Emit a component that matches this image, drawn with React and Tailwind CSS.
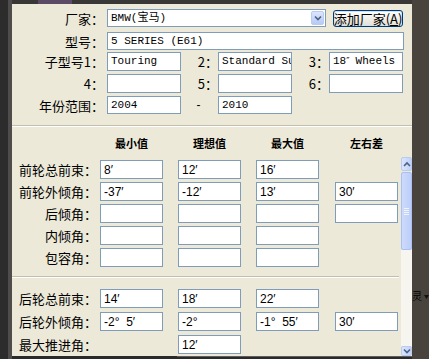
import React from "react";

const CJK = "font-['Noto_Sans_CJK_SC','Noto_Sans',sans-serif]";
const MONO = "font-['Liberation_Mono','Noto_Sans_CJK_SC',monospace]";
const SANS = "font-['Liberation_Sans','Noto_Sans_CJK_SC',sans-serif]";

function Box({ w, h = "h-[19px]", children, mono = true }) {
  return (
    <div
      className={`${w} ${h} shrink-0 border border-[#7f9db9] bg-white flex items-center pl-[3px] overflow-hidden whitespace-nowrap text-black ${
        mono ? `${MONO} text-[11px]` : `${SANS} text-[12px]`
      }`}
    >
      {children}
    </div>
  );
}

function TopLabel({ children, w = "w-[92px]" }) {
  return (
    <div className={`${w} shrink-0 text-right ${CJK} text-[13px] leading-none text-black`}>
      {children}
    </div>
  );
}

function Groove({ className = "" }) {
  return <div className={`h-[2px] border-t border-t-[#c2bfae] border-b border-b-white ${className}`} />;
}

function Chevron({ up }) {
  return (
    <svg width="8" height="6" viewBox="0 0 8 6">
      <path
        d={up ? "M1 5 L4 2 L7 5" : "M1 1.5 L4 4.5 L7 1.5"}
        fill="none"
        stroke="#4d6185"
        strokeWidth="1.6"
      />
    </svg>
  );
}

function LowerRow({ label, v1, v2, v3, v4, show = [true, true, true, true] }) {
  const vals = [v1, v2, v3, v4];
  return (
    <div className="flex items-center h-[19px]">
      <div className={`w-[85px] shrink-0 text-right ${CJK} text-[13px] leading-none text-black`}>{label}</div>
      <div className="w-[3px] shrink-0" />
      {vals.map((v, i) => (
        <div key={i} className={`flex ${i === 0 ? "" : i === 3 ? "ml-[16px]" : "ml-[15px]"}`}>
          {show[i] ? (
            <Box w="w-[63px]" mono={false}>
              {v}
            </Box>
          ) : (
            <div className="w-[63px] h-[19px]" />
          )}
        </div>
      ))}
    </div>
  );
}

export default function App() {
  return (
    <div className="w-[429px] h-[359px] bg-[#47433c] flex overflow-hidden">
      {/* left strip */}
      <div className="w-[12px] shrink-0 flex">
        <div className="w-[8px] bg-[#2c2c2c]" />
        <div className="w-[4px] bg-[#4e4d4b]" />
      </div>

      {/* middle */}
      <div className="w-[400px] shrink-0 flex flex-col">
        <div className="h-[4px] bg-[#3a3837] flex">
          <div className="ml-[26px] w-[34px] bg-[#5b4b66]" />
        </div>

        <div className="h-[352px] bg-[#ece9d8] flex flex-col">
          {/* top section */}
          <div className="h-[121px] flex flex-col">
            {/* row 1 */}
            <div className="mt-[5px] flex items-center h-[18px]">
              <TopLabel>厂家：</TopLabel>
              <div className="w-[3px] shrink-0" />
              <div className="w-[219px] h-[18px] border border-[#7f9db9] bg-white flex items-stretch p-[1px]">
                <div className={`flex-1 flex items-center pl-[2px] ${MONO} text-[11px] text-black whitespace-nowrap`}>
                  BMW(宝马)
                </div>
                <div className="w-[13px] rounded-[2px] border border-[#b9cbf3] bg-gradient-to-b from-[#dce6fd] to-[#b7caf6] flex items-center justify-center">
                  <Chevron />
                </div>
              </div>
              <div className="w-[7px] shrink-0" />
              <div
                className={`w-[70px] h-[17px] rounded-[3px] border border-[#003c74] bg-gradient-to-b from-white to-[#e3e0d2] shadow-[inset_0_0_0_1px_#cfe0fb] flex items-center justify-center ${CJK} text-[13px] leading-none text-black whitespace-nowrap`}
              >
                添加厂家(<span className="underline">A</span>)
              </div>
            </div>

            {/* row 2 */}
            <div className="mt-[5px] flex items-center h-[18px]">
              <TopLabel>型号：</TopLabel>
              <div className="w-[3px] shrink-0" />
              <Box w="w-[297px]" h="h-[18px]">5 SERIES (E61)</Box>
            </div>

            {/* row 3 */}
            <div className="mt-[2px] flex items-center h-[19px]">
              <TopLabel>子型号1：</TopLabel>
              <div className="w-[3px] shrink-0" />
              <Box w="w-[74px]">Touring</Box>
              <TopLabel w="w-[37px]">2：</TopLabel>
              <Box w="w-[74px]">Standard Su</Box>
              <TopLabel w="w-[37px]">3：</TopLabel>
              <Box w="w-[74px]">
                <span>18</span>
                <span className="font-['DejaVu_Sans',sans-serif] text-[9px]">″</span>
                <span className="ml-[6px]">Wheels</span>
              </Box>
            </div>

            {/* row 4 */}
            <div className="mt-[3px] flex items-center h-[19px]">
              <TopLabel>4：</TopLabel>
              <div className="w-[3px] shrink-0" />
              <Box w="w-[74px]"></Box>
              <TopLabel w="w-[37px]">5：</TopLabel>
              <Box w="w-[74px]"></Box>
              <TopLabel w="w-[37px]">6：</TopLabel>
              <Box w="w-[74px]"></Box>
            </div>

            {/* row 5 */}
            <div className="mt-[3px] flex items-center h-[18px]">
              <TopLabel>年份范围：</TopLabel>
              <div className="w-[3px] shrink-0" />
              <Box w="w-[74px]" h="h-[18px]">2004</Box>
              <div className={`w-[37px] shrink-0 text-center pr-[2px] ${SANS} text-[12px] text-black`}>-</div>
              <Box w="w-[74px]" h="h-[18px]">2010</Box>
            </div>
          </div>

          <Groove />

          {/* lower section */}
          <div className="flex-1 flex">
            <div className="w-[389px] shrink-0 flex flex-col pt-[9px]">
              <div className="flex h-[14px] items-center">
                <div className="w-[88px] shrink-0" />
                {["最小值", "理想值", "最大值", "左右差"].map((t, i) => (
                  <div
                    key={t}
                    className={`w-[63px] text-center ${CJK} text-[11px] font-bold leading-none text-black ${
                      i === 0 ? "" : i === 3 ? "ml-[16px]" : "ml-[15px]"
                    }`}
                  >
                    {t}
                  </div>
                ))}
              </div>

              <div className="mt-[10px] flex flex-col gap-[3px]">
                <LowerRow label="前轮总前束：" v1="8′" v2="12′" v3="16′" show={[true, true, true, false]} />
                <LowerRow label="前轮外倾角：" v1="-37′" v2="-12′" v3="13′" v4="30′" />
                <LowerRow label="后倾角：" />
                <LowerRow label="内倾角：" show={[true, true, true, false]} />
                <LowerRow label="包容角：" show={[true, true, true, false]} />
              </div>

              <Groove className="mt-[9px] mr-[2px]" />

              <div className="mt-[11px] flex flex-col gap-[4px]">
                <LowerRow label="后轮总前束：" v1="14′" v2="18′" v3="22′" show={[true, true, true, false]} />
                <LowerRow
                  label="后轮外倾角："
                  v1={<span className="whitespace-pre">-2°  5′</span>}
                  v2="-2°"
                  v3={<span className="whitespace-pre">-1°  55′</span>}
                  v4="30′"
                />
                <LowerRow label="最大推进角：" v2="12′" show={[false, true, false, false]} />
              </div>
            </div>

            {/* scrollbar */}
            <div className="w-[11px] shrink-0 pt-[30px] flex flex-col">
              <div className="h-[14px] rounded-[2px] border border-[#b9cbf3] bg-gradient-to-r from-[#dbe5fd] to-[#c0d1f8] flex items-center justify-center">
                <Chevron up />
              </div>
              <div className="mt-[1px] h-[78px] rounded-[2px] border border-[#aac0f3] bg-gradient-to-r from-[#cddbfc] to-[#bccef8] flex flex-col items-center justify-center gap-[1px]">
                <div className="w-[5px] h-[1px] bg-[#eef3fe]" />
                <div className="w-[5px] h-[1px] bg-[#eef3fe]" />
                <div className="w-[5px] h-[1px] bg-[#eef3fe]" />
                <div className="w-[5px] h-[1px] bg-[#eef3fe]" />
              </div>
              <div className="flex-1 bg-[#f6f5f0]" />
              <div className="h-[10px] rounded-[2px] border border-[#b9cbf3] bg-gradient-to-r from-[#dbe5fd] to-[#c0d1f8] flex items-center justify-center">
                <Chevron />
              </div>
            </div>
          </div>
        </div>

        <div className="h-[3px] bg-[#2a2a2a] flex">
          <div className="ml-[165px] flex-1 border-t border-t-[#5e5e5e]" />
        </div>
      </div>

      {/* right */}
      <div className="flex-1 bg-[#48443d] pt-[291px] flex items-start">
        <div className={`${CJK} text-[10px] leading-none text-black`}>灵</div>
        <svg className="ml-[2px] mt-[4px]" width="5" height="4" viewBox="0 0 5 4">
          <path d="M0 0 L5 0 L2.5 4 Z" fill="#111" />
        </svg>
      </div>
    </div>
  );
}
